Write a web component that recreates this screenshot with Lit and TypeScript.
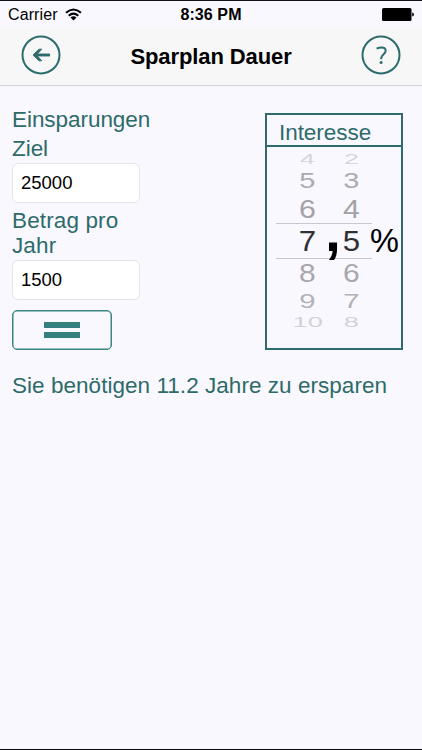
import { LitElement, html, css } from "lit";
import { customElement, property } from "lit/decorators.js";
import { styleMap } from "lit/directives/style-map.js";

const ROWS = [
  { h: 16, sx: 0.86, sy: 0.46, color: "#d6d5db" },
  { h: 27, sx: 0.93, sy: 0.72, color: "#acabb0" },
  { h: 29, sx: 0.97, sy: 0.89, color: "#a3a2a7" },
  { h: 35, sx: 1, sy: 1, color: "#303033" },
  { h: 29, sx: 0.96, sy: 0.87, color: "#a8a7ac" },
  { h: 27, sx: 0.94, sy: 0.7, color: "#b3b2b7" },
  { h: 16, sx: 0.87, sy: 0.46, color: "#d3d2d8" },
];

@customElement("picker-wheel")
export class PickerWheel extends LitElement {
  @property({ type: Array }) values: number[] = [];
  static styles = css`
    :host { display: flex; flex-direction: column; }
    .row { display: flex; justify-content: center; align-items: center; }
    .digit { font-size: 30px; line-height: 30px; }
  `;
  render() {
    return this.values.map((v, i) => {
      const r = ROWS[i];
      return html`<div class="row" style=${styleMap({ height: r.h + "px", color: r.color })}>
        <span class="digit" style=${styleMap({ transform: `scale(${r.sx * 1.04}, ${r.sy})` })}>${v}</span>
      </div>`;
    });
  }
}

@customElement("app-root")
export class AppRoot extends LitElement {
  static styles = css`
    :host {
      display: block; box-sizing: border-box; height: 750px; width: 422px; overflow: hidden;
      background: #faf8ff; border-top: 1px solid #141018; border-bottom: 1px solid #0c0a10;
      font-family: "Liberation Sans", Arial, sans-serif; color: #000;
    }
    .status { height: 27px; display: grid; grid-template-columns: 1fr auto 1fr; align-items: center; padding: 0 8px 0 8px; font-size: 16px; line-height: 27px; }
    .carrier { display: flex; align-items: center; gap: 7px; }
    .carrier span { letter-spacing: 0.1px; }
    .time { font-weight: bold; letter-spacing: 0.1px; }
    .battery { justify-self: end; }
    svg { display: block; }
    .wifi { margin-top: -1px; }
    .nav { height: 57px; background: #f7f7f7; border-bottom: 1px solid #d3d3dc; display: flex; justify-content: space-between; align-items: center; padding: 0 21px; }
    .nav svg { margin-top: -3px; }
    .title { font-size: 22px; font-weight: bold; line-height: 26px; letter-spacing: -0.1px; }
    .main { display: flex; justify-content: space-between; padding: 18px 19px 0 12px; height: 254px; }
    .form { width: 142px; color: #2d6b69; font-size: 22.5px; display: flex; flex-direction: column; }
    .label { margin-left: 0; }
    .one { line-height: 29px; margin-top: 1px; letter-spacing: -0.05px; }
    .two { line-height: 25px; margin-top: 5px; letter-spacing: 0.12px; }
    .field { box-sizing: border-box; width: 128px; height: 40px; border: 1px solid #e5e3ec; border-radius: 6px; background: #fff; color: #000; font-size: 18.5px; line-height: 38px; padding-left: 8px; }
    .two + .field { margin-top: 2px; }
    .equals { box-sizing: border-box; width: 100px; height: 40px; margin-top: 10px; border: 1px solid #3b8582; box-shadow: inset 0 0 0 0.5px #3b8582; border-radius: 5px; display: flex; flex-direction: column; gap: 4px; align-items: center; justify-content: center; }
    .bar { width: 36px; height: 6px; background: #34807f; }
    .rate { position: relative; box-sizing: border-box; width: 138px; height: 237px; margin-top: 9px; border: 2px solid #2e6a6f; }
    .head { height: 30px; border-bottom: 2px solid #2e6a6f; color: #2d6b69; font-size: 22.5px; line-height: 35px; padding-left: 12px; letter-spacing: -0.05px; }
    .wheels { display: flex; padding: 4px 0 0 19px; }
    picker-wheel { width: 43px; }
    picker-wheel + picker-wheel { width: 44px; }
    .band { position: absolute; left: 9px; top: 108px; width: 96px; height: 34px; border-top: 1px solid #c9c8ce; border-bottom: 1px solid #c9c8ce; }
    .comma { position: absolute; left: 58px; top: 88px; font-size: 57px; line-height: 57px; font-weight: bold; }
    .percent { position: absolute; left: 103px; top: 108px; font-size: 32.5px; line-height: 36px; }
    .result { margin-left: 12px; padding-top: 14px; color: #2d6b69; font-size: 22.5px; line-height: 27px; letter-spacing: 0.04px; white-space: nowrap; }
  `;
  render() {
    return html`
      <div class="status">
        <div class="carrier"><span>Carrier</span>
          <svg class="wifi" width="17" height="13" viewBox="0 0 17 13" fill="none" stroke="#000" stroke-width="2">
            <path d="M1 4.8Q8.5-1.8 16 4.8M3.7 7.7Q8.5 3.6 13.3 7.7"/><path d="M5.5 9.5Q8.5 7.2 11.5 9.5L8.5 12.5Z" fill="#000" stroke="none"/>
          </svg>
        </div>
        <div class="time">8:36 PM</div>
        <svg class="battery" width="32" height="13" viewBox="0 0 32 13"><rect width="29.5" height="13" rx="1.5"/><path d="M30.2 4.5Q32 5 32 6.5T30.2 8.5Z"/></svg>
      </div>
      <div class="nav">
        <svg width="40" height="40" viewBox="0 0 40 40" fill="none" stroke="#2d6c6d"><circle cx="20" cy="20" r="18.5" stroke-width="2"/><path d="M29 20H14" stroke-width="2.9"/><path d="M20.8 14.2H18L12 20L18 25.8H20.8L15.4 20Z" fill="#2d6c6d" stroke-width=".9"/></svg>
        <div class="title">Sparplan Dauer</div>
        <svg width="40" height="40" viewBox="0 0 40 40" fill="none" stroke="#2d6c6d"><circle cx="20" cy="20" r="18.5" stroke-width="2"/><path d="M15.6 13.6Q18 12.4 20.5 12.4C23.4 12.4 24.7 13.8 24.7 15.8C24.7 19 20.2 19.4 20.2 23.4V24.3" stroke-width="2"/><circle cx="20.1" cy="27.6" r="1.5" fill="#2d6c6d" stroke="none"/></svg>
      </div>
      <div class="main">
        <div class="form">
          <div class="label one">Einsparungen<br>Ziel</div>
          <div class="field">25000</div>
          <div class="label two">Betrag pro<br>Jahr</div>
          <div class="field">1500</div>
          <div class="equals"><div class="bar"></div><div class="bar"></div></div>
        </div>
        <div class="rate">
          <div class="head">Interesse</div>
          <div class="wheels">
            <picker-wheel .values=${[4, 5, 6, 7, 8, 9, 10]}></picker-wheel>
            <picker-wheel .values=${[2, 3, 4, 5, 6, 7, 8]}></picker-wheel>
          </div>
          <div class="band"></div>
          <div class="comma">,</div>
          <div class="percent">%</div>
        </div>
      </div>
      <div class="result">Sie benötigen 11.2 Jahre zu ersparen</div>
    `;
  }
}
